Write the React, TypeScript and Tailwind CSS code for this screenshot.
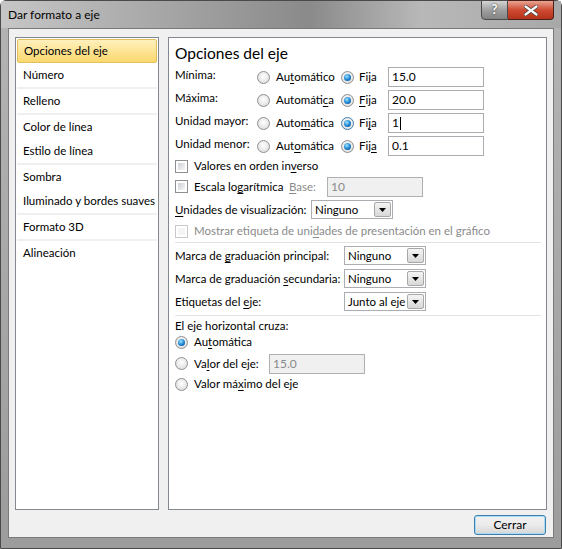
import type { ReactNode } from "react";

const font = { fontFamily: 'Lato, "Noto Sans", sans-serif' };

function U({ children }: { children: ReactNode }) {
  return <span className="underline underline-offset-2">{children}</span>;
}

function Radio({ checked, focus }: { checked?: boolean; focus?: boolean }) {
  return (
    <span
      className={`inline-flex items-center justify-center w-[13px] h-[13px] rounded-full border shrink-0 bg-[radial-gradient(circle_at_50%_40%,#ffffff,#d6d6d6)] ${
        focus ? "border-[#3c7fb1]" : "border-[#8e8f8f]"
      }`}
    >
      {checked && (
        <span className="w-[7px] h-[7px] rounded-full bg-[radial-gradient(circle_at_40%_35%,#9ce6ff,#1b7fcf_55%,#0b4a86)]" />
      )}
    </span>
  );
}

function Check({ disabled }: { disabled?: boolean }) {
  return (
    <span
      className={`inline-flex w-[13px] h-[13px] border shrink-0 p-[2px] bg-white ${
        disabled ? "border-[#c8c8c8]" : "border-[#8e8f8f]"
      }`}
    >
      <span
        className={`flex-1 ${
          disabled ? "bg-[#f4f4f4]" : "bg-[linear-gradient(135deg,#cdd0d6,#f7f7f7)]"
        }`}
      />
    </span>
  );
}

function Input({ value, disabled, caret }: { value: string; disabled?: boolean; caret?: boolean }) {
  return (
    <div
      className={`w-[96px] h-[20px] shrink-0 border flex items-center pl-[3px] text-[12px] ${
        disabled ? "bg-[#f0f0f0] border-[#afafaf] text-[#8a8a8a]" : "bg-white border-[#abadb3] text-black"
      }`}
    >
      {value}
      {caret && <span className="ml-[1px] w-px h-[13px] bg-black" />}
    </div>
  );
}

function Select({ value }: { value: string }) {
  return (
    <div className="w-[82px] h-[19px] shrink-0 border border-[#abadb3] bg-white flex items-stretch">
      <span className="flex-1 pl-[3px] leading-[17px] whitespace-nowrap overflow-hidden">{value}</span>
      <span className="w-[17px] m-[1px] border border-[#a8a8a8] rounded-[2px] bg-[linear-gradient(to_bottom,#f4f4f4,#d8d8d8)] flex items-center justify-center">
        <svg width="7" height="4" viewBox="0 0 7 4">
          <path d="M0 0h7L3.5 4z" fill="#000" />
        </svg>
      </span>
    </div>
  );
}

const items = [
  { t: "Opciones del eje", sep: false },
  { t: "Número", sep: true },
  { t: "Relleno", sep: true },
  { t: "Color de línea", sep: false },
  { t: "Estilo de línea", sep: true },
  { t: "Sombra", sep: false },
  { t: "Iluminado y bordes suaves", sep: true },
  { t: "Formato 3D", sep: true },
  { t: "Alineación", sep: false },
];

export default function App() {
  return (
    <div
      className="w-[562px] h-[549px] flex flex-col text-[11.5px] text-black whitespace-nowrap bg-[linear-gradient(to_bottom,#b4b4b4,#9c9c9c)] rounded-t-[6px] border border-[#4a4a4a]"
      style={font}
    >
      {/* title bar */}
      <div className="h-[27px] flex items-start justify-between bg-[linear-gradient(to_right,#c6c6c6,#9a9a9a_40%,#8a8a8a_55%,#b8b8b8_75%,#a8a8a8)]">
        <span className="pl-[7px] pt-[5px] text-[12px]">Dar formato a eje</span>
        <div className="flex mr-[7px] -mt-px">
          <div className="w-[27px] h-[20px] border border-[#4a4a4a] rounded-bl-[4px] bg-[linear-gradient(to_bottom,#d4d4d4,#a0a0a0_50%,#838383)] flex items-center justify-center text-white font-bold text-[13px] [text-shadow:0_0_2px_#222]">
            ?
          </div>
          <div className="w-[46px] h-[20px] border border-l-0 border-[#4a2018] rounded-br-[4px] bg-[linear-gradient(to_bottom,#e8a493,#cf4a30_50%,#b4321b)] flex items-center justify-center">
            <svg width="14" height="11" viewBox="0 0 14 11">
              <path d="M1.5 1.5l11 8M12.5 1.5l-11 8" stroke="#3b3b3b" strokeWidth="3.6" strokeLinecap="round" />
              <path d="M1.5 1.5l11 8M12.5 1.5l-11 8" stroke="#fff" strokeWidth="2.2" strokeLinecap="round" />
            </svg>
          </div>
        </div>
      </div>

      {/* body */}
      <div className="flex-1 mx-[7px] mb-[10px] bg-[#f0f0f0] border border-[#7a7a7a] flex flex-col px-[6px] pt-[8px]">
        <div className="flex gap-[9px] h-[473px]">
          {/* left list */}
          <div className="w-[144px] bg-white border border-[#828790] p-[1px] flex flex-col">
            {items.map((it, i) => (
              <div key={it.t} className={it.sep ? "border-b-2 border-[#f0f0f0]" : ""}>
                <div
                  className={`h-[24px] pl-[6px] flex items-center ${
                    i === 0
                      ? "border border-[#e3bf5b] rounded-[2px] bg-[linear-gradient(to_bottom,#fff0bd,#fbd86d)]"
                      : ""
                  }`}
                >
                  {it.t}
                </div>
              </div>
            ))}
          </div>

          {/* right panel */}
          <div className="flex-1 bg-white border border-[#828790] pl-[6px] pr-[5px] pt-[4px] flex flex-col">
            <div className="text-[15.5px] leading-[22px] h-[25px]">Opciones del eje</div>

            <div className="flex flex-col gap-[3px]">
              {[
                { l: "Mínima:", a: <>Au<U>t</U>omático</>, f: <>Fija</>, v: "15.0" },
                { l: "Máxima:", a: <>Automáti<U>c</U>a</>, f: <><U>F</U>ija</>, v: "20.0" },
                { l: "Unidad mayor:", a: <>Auto<U>m</U>ática</>, f: <>Fi<U>j</U>a</>, v: "1", caret: true },
                { l: "Unidad menor:", a: <>Aut<U>o</U>mática</>, f: <>Fij<U>a</U></>, v: "0.1" },
              ].map((r) => (
                <div key={r.l} className="flex items-center h-[20px]">
                  <span className="w-[82px] shrink-0 self-start leading-[16px]">{r.l}</span>
                  <div className="w-[84px] shrink-0 flex items-center gap-[6px]">
                    <Radio />
                    <span>{r.a}</span>
                  </div>
                  <div className="w-[47px] shrink-0 flex items-center gap-[5px]">
                    <Radio checked focus={r.caret} />
                    <span>{r.f}</span>
                  </div>
                  <Input value={r.v} caret={r.caret} />
                </div>
              ))}
            </div>

            <div className="flex items-center gap-[6px] h-[20px]">
              <Check />
              <span>Valores en orden in<U>v</U>erso</span>
            </div>
            <div className="flex items-center h-[21px]">
              <Check />
              <span className="ml-[6px] w-[95px] shrink-0">Escala lo<U>g</U>arítmica</span>
              <span className="w-[38px] shrink-0 text-[#8a8a8a]"><U>B</U>ase:</span>
              <Input value="10" disabled />
            </div>
            <div className="flex items-center h-[25px]">
              <span className="w-[136px] shrink-0"><U>U</U>nidades de visualización:</span>
              <Select value="Ninguno" />
            </div>
            <div className="flex items-center gap-[6px] h-[18px] text-[#8a8a8a]">
              <Check disabled />
              <span>Mostrar etiqueta de uni<U>d</U>ades de presentación en el gráfico</span>
            </div>

            <div className="h-px bg-[#e3e3e3] mt-[2px] mb-[3px]" />

            <div className="flex flex-col gap-[4px]">
              {[
                { l: <>Marca de <U>g</U>raduación principal:</>, v: "Ninguno" },
                { l: <>Marca de graduación <U>s</U>ecundaria:</>, v: "Ninguno" },
                { l: <>Etiquetas del <U>e</U>je:</>, v: "Junto al eje" },
              ].map((r, i) => (
                <div key={i} className="flex items-center h-[19px]">
                  <span className="w-[169px] shrink-0">{r.l}</span>
                  <Select value={r.v} />
                </div>
              ))}
            </div>

            <div className="h-px bg-[#e3e3e3] mt-[4px]" />

            <div className="h-[16px] leading-[16px] mt-[2px]">El eje horizontal cruza:</div>
            <div className="flex items-center gap-[6px] h-[16px]">
              <Radio checked />
              <span>Au<U>t</U>omática</span>
            </div>
            <div className="flex items-center h-[21px] mt-[3px]">
              <Radio />
              <span className="ml-[6px] w-[75px] shrink-0">Va<U>l</U>or del eje:</span>
              <Input value="15.0" disabled />
            </div>
            <div className="flex items-center gap-[6px] h-[18px] mt-[1px]">
              <Radio />
              <span>Valor má<U>x</U>imo del eje</span>
            </div>
          </div>
        </div>

        <div className="flex justify-end mt-[5px] pr-[1px]">
          <button className="w-[72px] h-[20px] border border-[#3c7fb1] rounded-[3px] bg-[linear-gradient(to_bottom,#f2f2f2,#ebebeb_50%,#d6d6d6)] shadow-[inset_0_0_0_1px_#a8dcf6] text-[12px] leading-[16px]">
            Cerrar
          </button>
        </div>
      </div>
    </div>
  );
}
